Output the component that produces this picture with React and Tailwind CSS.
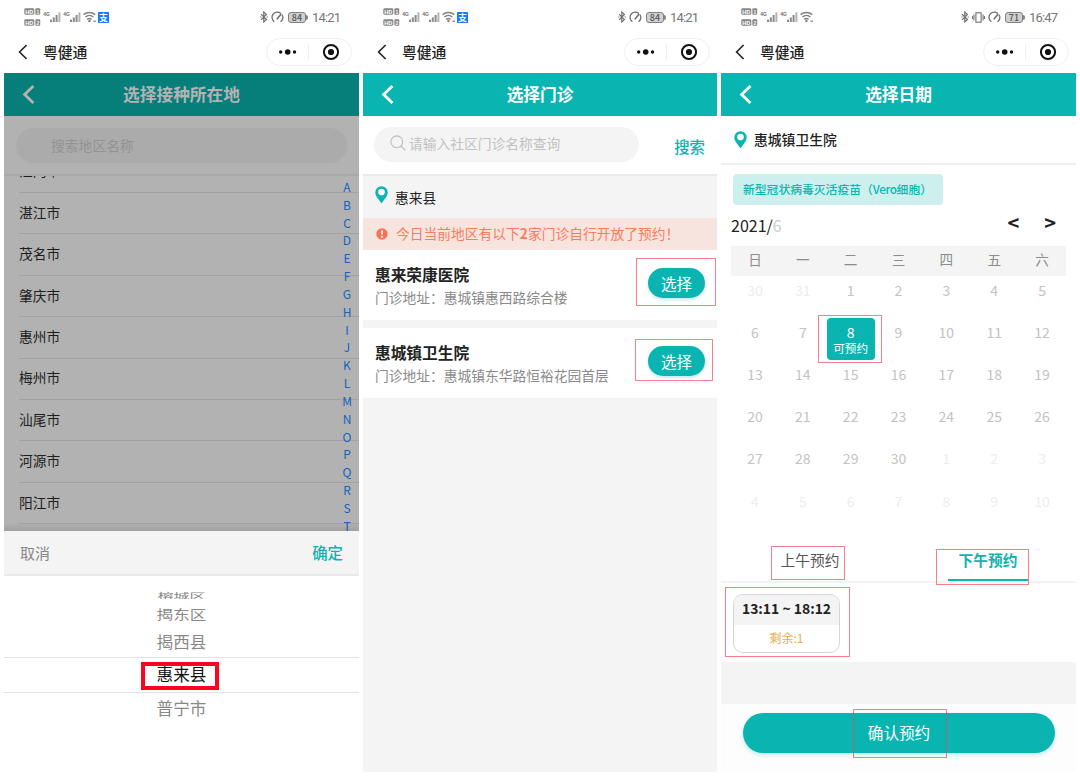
const cities = ['江门市', '湛江市', '茂名市', '肇庆市', '惠州市', '梅州市', '汕尾市', '河源市', '阳江市'];
const letters = 'ABCDEFGHIJKLMNOPQRST'.split('');

const clinics = [
  { name: '惠来荣康医院', address: '惠城镇惠西路综合楼', mark: '-left-[12px] -right-[11px] -top-[10px] -bottom-[8px]' },
  { name: '惠城镇卫生院', address: '惠城镇东华路恒裕花园首层', mark: '-left-[13px] -right-[8px] -top-[7px] -bottom-[5px]' },
];

const weekdays = ['日', '一', '二', '三', '四', '五', '六'];

const days = [
  ...[30, 31].map((day) => ({ day, other: true })),
  ...Array.from({ length: 30 }, (_, i) => ({ day: i + 1, other: false })),
  ...Array.from({ length: 10 }, (_, i) => ({ day: i + 1, other: true })),
];

const Mark = ({ className }) => (
  <span className={`absolute border border-[#fb7f8b] pointer-events-none ${className}`} />
);

const HdBadge = ({ y, sim }) => (
  <g>
    <rect x="0.3" y={y} width="10" height="6.4" rx="1.4" fill="#858585" />
    <text x="5.3" y={y + 5.2} fontSize="5.6" fontWeight="700" textAnchor="middle" fill="#fff">HD</text>
    <rect x="11.4" y={y} width="4.8" height="6.4" rx="1" fill="#858585" />
    <text x="13.8" y={y + 5.2} fontSize="5" fontWeight="700" textAnchor="middle" fill="#fff">{sim}</text>
  </g>
);

const Signal = ({ x }) => (
  <g fill="#8b8b8b">
    <text x={x - 0.4} y="9.4" fontSize="5" fontWeight="700" fill="#6f6f6f">4G</text>
    <rect x={x + 6.4} y="12.6" width="2" height="2.4" />
    <rect x={x + 9.2} y="10.4" width="2" height="4.6" />
    <rect x={x + 12} y="8" width="2" height="7" />
    <rect x={x + 14.8} y="5.4" width="2" height="9.6" fill="#b4b4b4" />
  </g>
);

const Bluetooth = () => (
  <svg width="8" height="12" viewBox="0 0 8 12" fill="none" stroke="#707070" strokeWidth="1.2">
    <path d="M1 3.2 6.4 8.6 3.8 11V1l2.6 2.4L1 8.8" />
    <path d="M.2 6h1.2M6.6 6h1.2" strokeWidth="1.2" />
  </svg>
);

const Vibrate = () => (
  <svg width="13" height="11" viewBox="0 0 13 11" fill="none" stroke="#707070" strokeWidth="1.1">
    <rect x="3.9" y="0.8" width="5.2" height="9.4" />
    <path d="M1.9 2.4v6.2M11.1 2.4v6.2M.4 4v3M12.6 4v3" />
  </svg>
);

const Gauge = () => (
  <svg width="13" height="12" viewBox="0 0 13 12" fill="none" stroke="#707070" strokeWidth="1.3" strokeLinecap="round">
    <path d="M3 10.4A5.2 5.2 0 1 1 9.6 2.2M11.3 4.2a5.2 5.2 0 0 1-1.4 6.2" />
    <path d="M6.2 7.8 9.8 3.6" strokeWidth="1.6" />
  </svg>
);

const StatusBar = ({ battery, time, alipay, vibrate }) => (
  <div className="h-[31px] pl-5 pr-[19px] pt-[3px] flex items-center justify-between">
    <svg width="88" height="20" viewBox="0 0 88 20" fontFamily="Liberation Sans, sans-serif">
      <HdBadge y={1.3} sim="1" />
      <HdBadge y={12.3} sim="2" />
      <Signal x={19.6} />
      <Signal x={39.6} />
      <g fill="none" stroke="#808080" strokeWidth="1.5">
        <path d="M59.6 7.6a9 9 0 0 1 11.6 0M61.4 10a6 6 0 0 1 8 0M63.2 12.4a3.6 3.6 0 0 1 4.4 0" />
      </g>
      <circle cx="65.4" cy="14" r="1.2" fill="#808080" />
      <path d="M69.4 14.2h2.6" stroke="#808080" strokeWidth="1.2" />
      {alipay && (
        <g>
          <rect x="74" y="5" width="11" height="11" rx="0.8" fill="#1677ff" />
          <text x="79.5" y="13.8" fontSize="9" fontWeight="700" textAnchor="middle" fill="#fff" fontFamily="Noto Sans CJK SC, sans-serif">支</text>
        </g>
      )}
    </svg>
    <div className="flex items-center gap-[3px] text-[#757575]">
      <Bluetooth />
      {vibrate && <Vibrate />}
      <Gauge />
      <span className="flex items-center ml-px mr-px">
        <span className="w-[18px] h-[11px] border border-[#808080] rounded-[3px] bg-[#d0d0d0] flex items-center justify-center text-[9px] leading-none font-medium text-[#555]">
          {battery}
        </span>
        <span className="w-[2px] h-[5px] bg-[#858585] rounded-r" />
      </span>
      <span className="text-[13px] leading-none w-[28px] tracking-[-0.8px] font-[Roboto] whitespace-nowrap">{time}</span>
    </div>
  </div>
);

const NavBar = () => (
  <div className="h-[42px] pl-[14px] pr-[7px] flex items-center">
    <svg width="10" height="16" viewBox="0 0 10 16" fill="none" stroke="#222" strokeWidth="1.6">
      <path d="M8.6 1 1.6 8l7 7" />
    </svg>
    <span className="ml-[15px] text-[14.8px] leading-none font-medium text-[#222]">粤健通</span>
    <div className="ml-auto w-[86px] h-[28px] rounded-full border border-[#f0f0f0] flex items-center">
      <svg width="84" height="26" viewBox="0 0 84 26" fill="#111">
        <circle cx="13.7" cy="13" r="1.7" />
        <circle cx="20.7" cy="13" r="2.8" />
        <circle cx="27.5" cy="13" r="1.7" />
        <path d="M41.5 5v16" stroke="#f0f0f0" />
        <circle cx="64" cy="13" r="7.1" fill="none" stroke="#111" strokeWidth="2" />
        <circle cx="64" cy="13" r="3.1" />
      </svg>
    </div>
  </div>
);

const TitleBar = ({ title, dimmed }) => (
  <div
    className={`relative h-[43px] flex items-center justify-center text-[16.7px] leading-none font-bold ${
      dimmed ? 'bg-[#067f7b] text-[#b3b3b3]' : 'bg-[#0ab5b1] text-white'
    }`}
  >
    <svg className="absolute left-[18px] top-[12px]" width="13" height="19" viewBox="0 0 13 19" fill="none" stroke="currentColor" strokeWidth="2.8">
      <path d="M11.4 1 2.6 9.4l8.8 8.6" />
    </svg>
    <span className="-mt-px">{title}</span>
  </div>
);

const Pin = () => (
  <svg width="13" height="18" viewBox="0 0 13 18">
    <path d="M6.5.3A6.2 6.2 0 0 0 .3 6.5c0 4 3.8 7 6.2 11 2.4-4 6.2-7 6.2-11A6.2 6.2 0 0 0 6.5.3Z" fill="#0ab5b1" />
    <circle cx="6.5" cy="6.1" r="3.3" fill="#fff" />
  </svg>
);

const RegionScreen = () => (
  <section className="w-[355px] h-[772px] flex flex-col">
    <StatusBar battery="84" time="14:21" alipay />
    <NavBar />
    <TitleBar title="选择接种所在地" dimmed />
    <div className="relative h-[415px] bg-[#b2b2b2] flex flex-col overflow-hidden">
      <div className="h-[60px] shrink-0 px-3 pt-3 border-b-2 border-[#a8a8a8]">
        <div className="h-[35px] w-[331px] rounded-full bg-[#ababab] pl-[35px] pt-px flex items-center text-[13.8px] leading-none text-[#929292]">
          搜索地区名称
        </div>
      </div>
      <div className="overflow-hidden">
        <ul className="-mt-[24.4px] pl-[15px]">
          {cities.map((city) => (
            <li key={city} className="h-[41.4px] pb-px border-b border-[#a2a2a2] flex items-center text-[13.7px] leading-none text-[#1d1d1d]">
              {city}
            </li>
          ))}
        </ul>
      </div>
      <ul className="absolute right-[3px] top-[62px] w-[18px] text-center text-[12px] text-[#1563bd]">
        {letters.map((letter) => (
          <li key={letter} className="h-[17.83px] leading-[17.83px]">{letter}</li>
        ))}
      </ul>
      <div className="absolute inset-x-0 bottom-0 h-[8px] bg-gradient-to-b from-transparent to-black/10" />
    </div>
    <div className="h-[45px] px-4 bg-[#f4f4f4] border-b-2 border-[#e9e9e9] flex items-center justify-between leading-none">
      <span className="text-[15px] text-[#888]">取消</span>
      <span className="text-[15.4px] font-medium text-[#0ab5b1]">确定</span>
    </div>
    <div className="flex-1 flex flex-col items-center text-[16.6px] leading-none text-[#888]">
      <div className="mt-[14px] h-[9px] w-full flex items-center justify-center overflow-hidden">
        <span className="text-[16px] [transform:scaleY(0.5)]">榕城区</span>
      </div>
      <div className="h-[28px] flex items-center"><span className="[transform:scaleY(0.78)]">揭东区</span></div>
      <div className="h-[30px] pb-[2px] flex items-center"><span className="[transform:scaleY(0.96)]">揭西县</span></div>
      <div className="relative w-full h-[36px] pb-px border-y border-[#e3e3e3] flex items-center justify-center text-[#111]">
        惠来县
        <span className="absolute left-[137px] top-[4px] w-[78px] h-[28px] border-4 border-[#fb0422]" />
      </div>
      <div className="h-[30px] flex items-center">普宁市</div>
    </div>
  </section>
);

const ClinicScreen = () => (
  <section className="w-[354px] h-[772px] flex flex-col">
    <StatusBar battery="84" time="14:21" alipay />
    <NavBar />
    <TitleBar title="选择门诊" />
    <div className="h-[60px] pl-[11px] pr-[12px] pt-[11px] border-b-2 border-[#eaeaea] flex justify-between leading-none">
      <div className="w-[265px] h-[35px] rounded-full bg-[#f4f4f4] pl-4 flex items-center gap-[3px] text-[13.75px] text-[#c2c2c2]">
        <svg className="-mt-[3px]" width="16" height="16" viewBox="0 0 16 16" fill="none" stroke="#bdbdbd" strokeWidth="1.1">
          <circle cx="6.8" cy="6.8" r="5.9" />
          <path d="m11 11 4.3 4.4" />
        </svg>
        <span className="-mt-px">请输入社区门诊名称查询</span>
      </div>
      <span className="mt-[12px] text-[15.4px] font-medium text-[#0ab5b1]">搜索</span>
    </div>
    <div className="flex-1 bg-[#f4f4f4]">
      <div className="h-[42px] pl-[12px] flex leading-none">
        <span className="mt-[10px]"><Pin /></span>
        <span className="ml-[7px] mt-[15px] text-[13.7px] text-[#222]">惠来县</span>
      </div>
      <div className="h-[32px] pl-[13px] bg-[#f8e4df] flex items-center text-[13.75px] leading-none text-[#fa7b5d]">
        <svg width="12" height="12" viewBox="0 0 12 12">
          <circle cx="6" cy="6" r="5.7" fill="#fa7254" />
          <path d="M6 2.6v4" stroke="#fff" strokeWidth="1.7" />
          <circle cx="6" cy="8.7" r="1" fill="#fff" />
        </svg>
        <span className="ml-[8px] whitespace-nowrap">今日当前地区有以下<b>2</b>家门诊自行开放了预约！</span>
      </div>
      <div className="flex flex-col gap-2">
        {clinics.map((clinic) => (
          <div key={clinic.name} className="h-[70px] bg-white pl-3 pr-[12px] flex justify-between leading-none">
            <div className="pt-[17px] flex flex-col gap-[8px]">
              <h3 className="text-[15.7px] font-bold text-[#222]">{clinic.name}</h3>
              <p className="text-[13.75px] text-[#8a8a8a]">门诊地址：{clinic.address}</p>
            </div>
            <div className="relative mt-[18px] w-[57px] h-[30px]">
              <button className="w-full h-full pt-[2px] rounded-full bg-[#0ab5b1] text-[15.5px] leading-none text-white shadow-[0_2px_3px_rgba(10,181,177,0.25)]">
                选择
              </button>
              <Mark className={clinic.mark} />
            </div>
          </div>
        ))}
      </div>
    </div>
  </section>
);

const DateScreen = () => (
  <section className="w-[355px] h-[772px] flex flex-col">
    <StatusBar battery="71" time="16:47" vibrate />
    <NavBar />
    <TitleBar title="选择日期" />
    <div className="h-[49px] pl-[13px] border-b-2 border-[#f0f0f0] flex items-center leading-none">
      <Pin />
      <span className="ml-[7px] mt-px text-[13.8px] font-medium text-[#222]">惠城镇卫生院</span>
    </div>
    <div className="mt-[9px] ml-[12px] w-[210px] h-[31px] pl-[10px] pb-px rounded-[4px] bg-[#cdf0ee] flex items-center text-[11.8px] leading-none font-medium text-[#0ab5b1] whitespace-nowrap">
      <span>新型冠状病毒灭活疫苗（<span className="tracking-[-0.4px]">Vero</span>细胞）</span>
    </div>
    <div className="h-[41px] pl-[10px] pr-[20px] pb-px flex items-center justify-between leading-none">
      <span className="text-[16px] text-[#222]">2021/<span className="text-[#ccc]">6</span></span>
      <div className="-mt-[5px] flex gap-[25px] text-[20px] font-bold text-[#222]">
        <span>&lt;</span>
        <span>&gt;</span>
      </div>
    </div>
    <div className="ml-[10px] w-[335px] grid grid-cols-7 text-center leading-none">
      {weekdays.map((name) => (
        <div key={name} className="h-[30px] bg-[#f4f4f4] pt-[7px] text-[13.6px] text-[#8c8c8c]">{name}</div>
      ))}
      {days.map(({ day, other }, i) => {
        if (day === 8 && !other) {
          return (
            <div key={i} className="relative h-[42.2px] rounded-[4px] bg-[#0ab5b1] text-white pt-[7px]">
              <div className="text-[14px]">8</div>
              <div className="mt-[4px] text-[11.6px]">可预约</div>
              <Mark className="-left-[9px] -right-[7px] -top-[3px] -bottom-[3px]" />
            </div>
          );
        }
        return (
          <div key={i} className={`h-[42.2px] pt-[6.6px] text-[14px] ${other ? 'text-[#ededed]' : 'text-[#c3c3c3]'}`}>
            {day}
          </div>
        );
      })}
    </div>
    <div className="h-[54px] pt-[18px] border-b-2 border-[#f3f3f3] flex text-[14.7px] leading-none">
      <div className="w-[178px] flex justify-center">
        <span className="relative h-[20px] pt-[6px] text-[#555]">
          上午预约
          <Mark className="-left-[10px] -right-[6px] -top-[1px] h-[34px]" />
        </span>
      </div>
      <div className="w-[177px] pl-px flex justify-center">
        <span className="relative w-[80px] pt-[6px] text-center font-bold text-[#0ab5b1] border-b-2 border-[#0ab5b1]">
          下午预约
          <Mark className="-left-[12px] -right-[1px] top-[2px] h-[36px]" />
        </span>
      </div>
    </div>
    <div className="h-[79px] pl-[12px] pt-[11px]">
      <div className="relative w-[107px] h-[59px]">
        <div className="h-full rounded-[10px] border border-[#d6d6d6] overflow-hidden text-center leading-none">
          <div className="h-[30px] pt-[7px] bg-[#f4f4f4] text-[13.9px] font-bold text-[#222] whitespace-nowrap">13:11 ~ 18:12</div>
          <div className="pt-[7px] text-[12px] text-[#e8ad50]">剩余:1</div>
        </div>
        <Mark className="-left-[8px] -right-[10px] -top-[7px] -bottom-[4px]" />
      </div>
    </div>
    <div className="h-[42px] bg-[#f4f4f4]" />
    <div className="flex-1 bg-[#fdfdfd] pl-[22px] pt-[9px]">
      <button className="relative w-[312px] h-[40px] rounded-full bg-[#0ab5b1] text-[15.6px] leading-none text-white shadow-[0_2px_4px_rgba(10,181,177,0.25)]">
        确认预约
        <span className="absolute left-[110px] -top-[4px] w-[94px] h-[49px] border border-[#e8495b]/70" />
      </button>
    </div>
  </section>
);

const App = () => {
  return (
    <main className='w-[1080px] h-[776px] bg-white pl-1 flex gap-1 overflow-hidden font-["Noto_Sans_CJK_SC",sans-serif]'>
      <RegionScreen />
      <ClinicScreen />
      <DateScreen />
    </main>
  );
};

export default App;
